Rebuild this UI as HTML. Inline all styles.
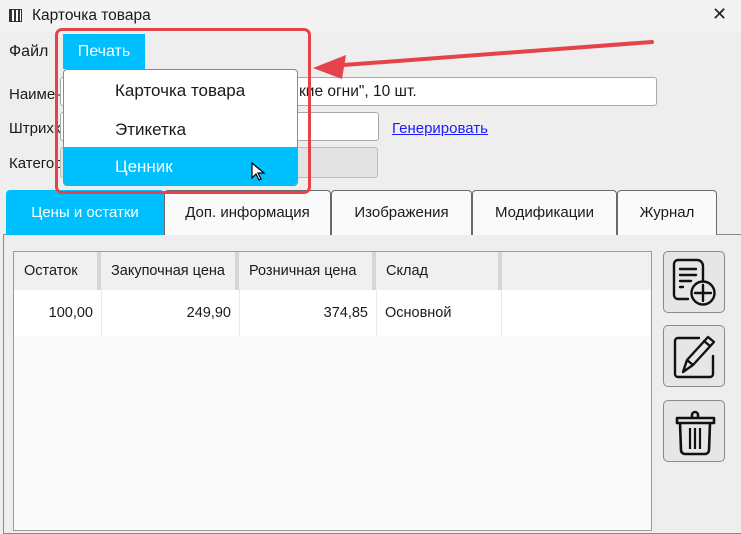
<!DOCTYPE html>
<html><head><meta charset="utf-8"><style>
*{box-sizing:border-box;margin:0;padding:0}
body{width:741px;height:519px;overflow:hidden;background:#eeeeee;font-family:"Liberation Sans","Noto Sans CJK SC",sans-serif;font-size:15px;color:#1a1a1a;position:relative}
.a{position:absolute}
.title{left:0;top:0;width:741px;height:32px;background:#f3f3f3}
.inp{background:#fff;border:1px solid #a8a8a8;border-radius:3px}
.tab{top:190px;height:45px;border:1px solid #6a6a6a;border-bottom:none;border-radius:4px 4px 0 0;background:#fafafa;text-align:center;line-height:44px;font-size:15px}
.hd{top:252px;height:38px;background:#f0f0f0;line-height:38px;font-size:14.5px;padding-left:10px;border-right:4px solid #d6d6d6}
.cell{top:290px;height:46px;line-height:46px;font-size:14.5px;border-right:1px solid #e8e8e8}
.btn{left:663px;width:62px;height:62px;border:1px solid #8a8a8a;border-radius:5px;background:#e6e6e6}
.mi{left:64px;width:233px;height:39px;line-height:39px;padding-left:51px;font-size:17px}
</style></head><body>
<div class="a title"></div>
<div class="a" style="left:9px;top:9px;width:13px;height:13px;border:1px solid #333;background:repeating-linear-gradient(90deg,#333 0 2px,#fff 2px 4px)"></div>
<div class="a" style="left:32px;top:7px;font-size:15.5px">Карточка товара</div>
<div class="a" style="left:712px;top:4px;font-size:18px;color:#222">✕</div>

<div class="a" style="left:9px;top:43px;font-size:16px">Файл</div>
<div class="a" style="left:63px;top:34px;width:82px;height:35px;background:#00bfff;color:#fff;font-size:16px;line-height:35px;text-align:center">Печать</div>

<div class="a" style="left:9px;top:86px">Наименование</div>
<div class="a inp" style="left:60px;top:77px;width:597px;height:29px;overflow:hidden"><span class="a" style="left:238px;top:5px;font-size:15.5px">кие огни", 10 шт.</span></div>
<div class="a" style="left:9px;top:120px">Штрихкод</div>
<div class="a inp" style="left:60px;top:112px;width:319px;height:29px"></div>
<div class="a" style="left:392px;top:120px;color:#1a1aff;text-decoration:underline">Генерировать</div>
<div class="a" style="left:9px;top:155px">Категория</div>
<div class="a" style="left:60px;top:147px;width:318px;height:31px;background:#e3e3e3;border:1px solid #bdbdbd;border-radius:3px"></div>

<!-- panel -->
<div class="a" style="left:3px;top:234px;width:760px;height:300px;border:1px solid #8a8a8a;background:#eeeeee"></div>
<div class="a tab" style="left:6px;width:158px;background:#00bfff;color:#fff;border-color:#00bfff">Цены и остатки</div>
<div class="a tab" style="left:164px;width:167px">Доп. информация</div>
<div class="a tab" style="left:331px;width:141px">Изображения</div>
<div class="a tab" style="left:472px;width:145px">Модификации</div>
<div class="a tab" style="left:617px;width:100px">Журнал</div>

<div class="a" style="left:13px;top:251px;width:639px;height:280px;background:#fafafa;border:1px solid #9a9a9a"></div>
<div class="a hd" style="left:14px;width:87px">Остаток</div>
<div class="a hd" style="left:101px;width:138px">Закупочная цена</div>
<div class="a hd" style="left:239px;width:137px">Розничная цена</div>
<div class="a hd" style="left:376px;width:126px">Склад</div>
<div class="a hd" style="left:502px;width:149px;border-right:none"></div>
<div class="a cell" style="left:14px;width:88px;text-align:right;padding-right:8px;background:#fff">100,00</div>
<div class="a cell" style="left:102px;width:138px;text-align:right;padding-right:8px;background:#fff">249,90</div>
<div class="a cell" style="left:240px;width:137px;text-align:right;padding-right:8px;background:#fff">374,85</div>
<div class="a cell" style="left:377px;width:125px;padding-left:8px;background:#fff">Основной</div>
<div class="a cell" style="left:502px;width:149px;background:#fff;border:none"></div>

<div class="a btn" style="top:251px"><svg width="62" height="62" fill="none" stroke="#111" stroke-width="2.4" stroke-linecap="round"><path d="M24 47h-10a4 4 0 0 1-4-4V12a4 4 0 0 1 4-4h19a6 6 0 0 1 6 6v14M16 17h16M16 23h16M16 29h11M16 35h3"/><circle cx="39" cy="41" r="11.5"/><path d="M39 33v16M31 41h16"/></svg></div>
<div class="a btn" style="top:325px"><svg width="62" height="62" fill="none" stroke="#111" stroke-width="2.4" stroke-linejoin="round" stroke-linecap="round"><path d="M35 12H14a3 3 0 0 0-3 3v33a3 3 0 0 0 3 3h32a3 3 0 0 0 3-3V30"/><path d="M19 46l4-12 21-23 6 5-21 23z M40 15l6 5 M23 34l6 5"/></svg></div>
<div class="a btn" style="top:400px"><svg width="62" height="62" fill="none" stroke="#111" stroke-width="2.6" stroke-linejoin="round"><path d="M13 17h37v5H13zM28 17v-3a3 3 0 0 1 6 0v3M16 22l1 27a4 4 0 0 0 4 4h20a4 4 0 0 0 4-4l1-27"/><path d="M26 27v21M31 27v21M36 27v21" stroke-width="2.2"/></svg></div>

<!-- dropdown -->
<div class="a" style="left:63px;top:69px;width:235px;height:117px;background:#fff;border:1px solid #8a8a8a;border-radius:4px;overflow:hidden"></div>
<div class="a mi" style="top:71px">Карточка товара</div>
<div class="a mi" style="top:110px">Этикетка</div>
<div class="a mi" style="top:147px;height:38px;background:#00bfff;color:#fff;border-radius:0 0 3px 3px">Ценник</div>
<svg class="a" style="left:250px;top:161px" width="16" height="22"><path d="M2 2v15l4-4 3 6 2-1-3-6h6z" fill="#fff" stroke="#000" stroke-width="1.2"/></svg>

<!-- annotation -->
<div class="a" style="left:55px;top:28px;width:256px;height:166px;border:3px solid #e5434a;border-radius:7px"></div>
<svg class="a" style="left:0;top:0" width="741" height="519"><path d="M652 42L330 66" stroke="#e5434a" stroke-width="4" stroke-linecap="round"/><path d="M313 68l33-13-4 24z" fill="#e5434a"/></svg>
</body></html>
